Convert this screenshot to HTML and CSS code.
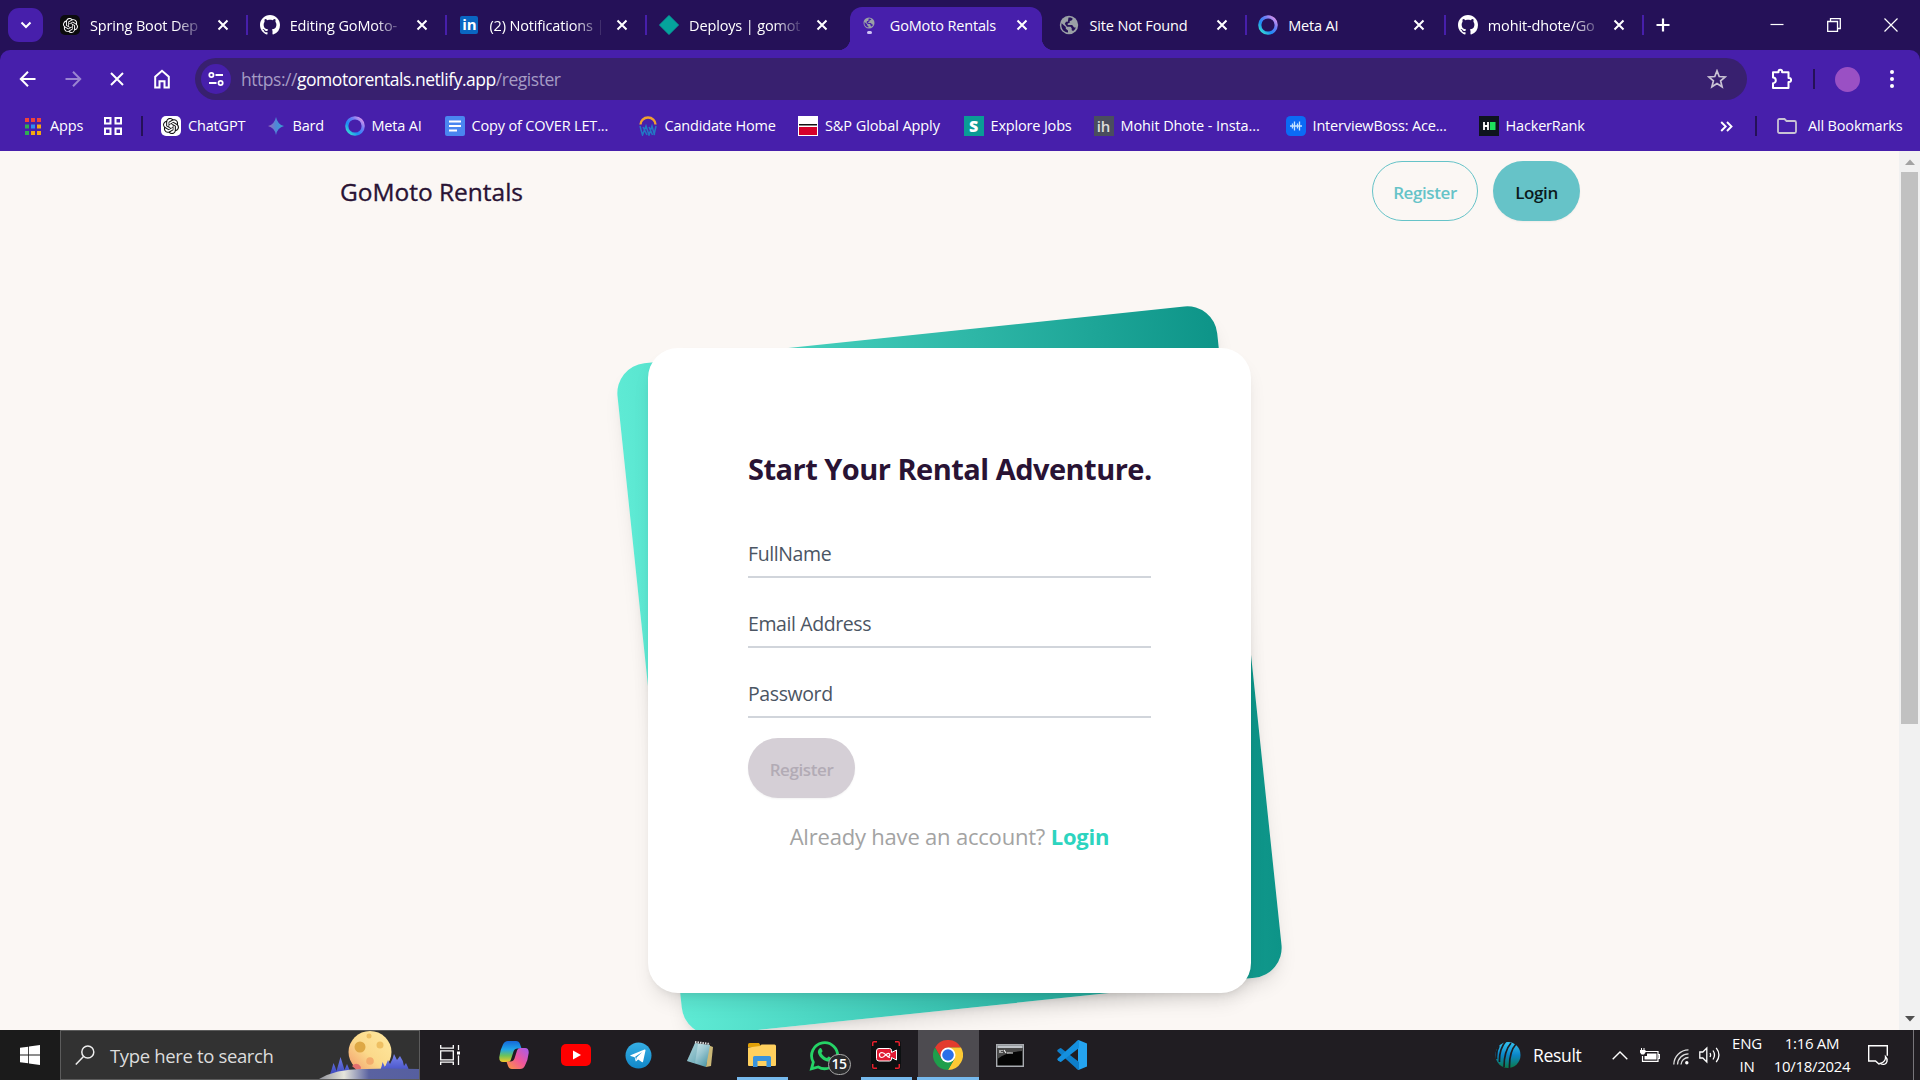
FILE: index.html
```html
<!DOCTYPE html>
<html lang="en">
<head>
<meta charset="utf-8">
<title>GoMoto Rentals</title>
<link rel="stylesheet" href="styles.css">
</head>
<body>
<svg width="0" height="0" class="defs" aria-hidden="true">
  <defs>
    <linearGradient id="metaG" x1="0" y1="1" x2="1" y2="0"><stop offset="0" stop-color="#3ef0c8"/><stop offset=".35" stop-color="#1c8cf5"/><stop offset=".65" stop-color="#6a7cf5"/><stop offset="1" stop-color="#f59be8"/></linearGradient>
    <linearGradient id="bardG" x1="0" y1="0" x2="1" y2="0"><stop offset="0" stop-color="#9a6bb8"/><stop offset=".5" stop-color="#4f86d8"/><stop offset="1" stop-color="#35a3d0"/></linearGradient>
    <linearGradient id="moonG" x1="1" y1="0" x2="0" y2="1"><stop offset="0" stop-color="#ffe9a0"/><stop offset=".55" stop-color="#fbd98a"/><stop offset="1" stop-color="#f2966a"/></linearGradient>
    <linearGradient id="hillG"><stop offset="0" stop-color="#8f9099"/><stop offset=".25" stop-color="#e6e6dc"/><stop offset=".5" stop-color="#5a62a0"/><stop offset="1" stop-color="#565fa0"/></linearGradient>
    <linearGradient id="treeG" x1="0" y1="0" x2="0" y2="1"><stop offset="0" stop-color="#7a86ee"/><stop offset="1" stop-color="#3440b8"/></linearGradient>
    <linearGradient id="copA" x1="0" y1="0" x2="0" y2="1"><stop offset="0" stop-color="#1668d8"/><stop offset=".4" stop-color="#1fa5e8"/><stop offset=".7" stop-color="#6cc35a"/><stop offset="1" stop-color="#f2c928"/></linearGradient>
    <linearGradient id="copB" x1="1" y1="0" x2="0" y2="1"><stop offset="0" stop-color="#a45cf0"/><stop offset=".5" stop-color="#f0569a"/><stop offset="1" stop-color="#fb9a3c"/></linearGradient>
    <linearGradient id="tgG" x1="0" y1="0" x2="0" y2="1"><stop offset="0" stop-color="#35aee4"/><stop offset="1" stop-color="#1187c8"/></linearGradient>
    <linearGradient id="noteG" x1="0" y1="0" x2="1" y2="1"><stop offset="0" stop-color="#e4f4f6"/><stop offset=".5" stop-color="#9cc8d2"/><stop offset="1" stop-color="#3d8d9e"/></linearGradient>
    <linearGradient id="cricG" x1="0" y1="0" x2="0" y2="1"><stop offset="0" stop-color="#35c3f0"/><stop offset=".5" stop-color="#0b86c8"/><stop offset="1" stop-color="#0b7a4a"/></linearGradient>
    <symbol id="x" viewBox="0 0 12 12"><path d="M1.5 1.5l9 9M10.5 1.5l-9 9" stroke="currentColor" stroke-width="2" fill="none"/></symbol>
    <symbol id="gh" viewBox="0 0 16 16"><path fill="#fff" d="M8 0C3.58 0 0 3.58 0 8c0 3.54 2.29 6.53 5.47 7.59.4.07.55-.17.55-.38 0-.19-.01-.82-.01-1.49-2.01.37-2.53-.49-2.69-.94-.09-.23-.48-.94-.82-1.13-.28-.15-.68-.52-.01-.53.63-.01 1.08.58 1.23.82.72 1.21 1.87.87 2.33.66.07-.52.28-.87.51-1.07-1.78-.2-3.64-.89-3.64-3.95 0-.87.31-1.59.82-2.15-.08-.2-.36-1.02.08-2.12 0 0 .67-.21 2.2.82.64-.18 1.32-.27 2-.27s1.36.09 2 .27c1.53-1.04 2.2-.82 2.2-.82.44 1.1.16 1.92.08 2.12.51.56.82 1.27.82 2.15 0 3.07-1.87 3.75-3.65 3.95.29.25.54.73.54 1.48 0 1.07-.01 1.93-.01 2.2 0 .21.15.46.55.38A8.01 8.01 0 0 0 16 8c0-4.42-3.58-8-8-8z"/></symbol>
    <symbol id="gpt" viewBox="0 0 24 24"><path fill="currentColor" d="M22.2819 9.8211a5.9847 5.9847 0 0 0-.5157-4.9108 6.0462 6.0462 0 0 0-6.5098-2.9A6.0651 6.0651 0 0 0 4.9807 4.1818a5.9847 5.9847 0 0 0-3.9977 2.9 6.0462 6.0462 0 0 0 .7427 7.0966 5.98 5.98 0 0 0 .511 4.9107 6.051 6.051 0 0 0 6.5146 2.9001A5.9847 5.9847 0 0 0 13.2599 24a6.0557 6.0557 0 0 0 5.7718-4.2058 5.9894 5.9894 0 0 0 3.9977-2.9001 6.0557 6.0557 0 0 0-.7475-7.0729zm-9.022 12.6081a4.4755 4.4755 0 0 1-2.8764-1.0408l.1419-.0804 4.7783-2.7582a.7948.7948 0 0 0 .3927-.6813v-6.7369l2.02 1.1686a.071.071 0 0 1 .038.052v5.5826a4.504 4.504 0 0 1-4.4945 4.4944zm-9.6607-4.1254a4.4708 4.4708 0 0 1-.5346-3.0137l.142.0852 4.783 2.7582a.7712.7712 0 0 0 .7806 0l5.8428-3.3685v2.3324a.0804.0804 0 0 1-.0332.0615L9.74 19.9502a4.4992 4.4992 0 0 1-6.1408-1.6464zM2.3408 7.8956a4.485 4.485 0 0 1 2.3655-1.9728V11.6a.7664.7664 0 0 0 .3879.6765l5.8144 3.3543-2.0201 1.1685a.0757.0757 0 0 1-.071 0l-4.8303-2.7865A4.504 4.504 0 0 1 2.3408 7.872zm16.5963 3.8558L13.1038 8.364 15.1192 7.2a.0757.0757 0 0 1 .071 0l4.8303 2.7913a4.4944 4.4944 0 0 1-.6765 8.1042v-5.6772a.79.79 0 0 0-.407-.667zm2.0107-3.0231l-.142-.0852-4.7735-2.7818a.7759.7759 0 0 0-.7854 0L9.409 9.2297V6.8974a.0662.0662 0 0 1 .0284-.0615l4.8303-2.7866a4.4992 4.4992 0 0 1 6.6802 4.66zM8.3065 12.863l-2.02-1.1638a.0804.0804 0 0 1-.038-.0567V6.0742a4.4992 4.4992 0 0 1 7.3757-3.4537l-.142.0805L8.704 5.459a.7948.7948 0 0 0-.3927.6813zm1.0976-2.3654l2.602-1.4998 2.6069 1.4998v2.9994l-2.5974 1.4997-2.6067-1.4997Z"/></symbol>
    <symbol id="meta" viewBox="0 0 20 20"><circle cx="10" cy="10" r="8.2" fill="none" stroke="url(#metaG)" stroke-width="3.2"/></symbol>
    <symbol id="globe" viewBox="0 0 20 20"><circle cx="10" cy="10" r="9.2" fill="#9aa0a6"/><path fill="var(--hole)" d="M2.6 8.2l4.2 3.9v1.6l2.2 1.7v2.2C5 17.300 2.200 14 2.400 10zM9.500 2.600c2-.4 3 .4 4.200.9-.2 1.700-1.200 2.400-3 2.400v1.800l-2 .8v1.600h4.500l1.900 2.400h1.700c-.4 1.400-1.300 2.700-2.700 3.500l-1.400-.8v-2l-1.200-1.400H8L5.800 8.700l1.200-2h1.800z"/></symbol>
  </defs>
</svg>

<div class="browser">
  <div class="tabstrip">
    <div class="tab-search"><svg width="12" height="8" viewBox="0 0 12 8"><path d="M1.500 1.500L6 6l4.500-4.500" fill="none" stroke="#fff" stroke-width="2"/></svg></div>
    <div class="tabs">
      <div class="tab"><span class="ico gpt-dark"><svg width="15" height="15"><use href="#gpt"/></svg></span><span class="title fade">Spring Boot Dep</span><svg class="close"><use href="#x"/></svg></div>
      <div class="tab"><svg class="ico"><use href="#gh"/></svg><span class="title fade">Editing GoMoto-</span><svg class="close"><use href="#x"/></svg></div>
      <div class="tab"><span class="ico linkedin">in</span><span class="title fade">(2) Notifications |</span><svg class="close"><use href="#x"/></svg></div>
      <div class="tab nosep"><svg class="ico" viewBox="0 0 20 20"><path d="M10 .5l9.500 9.500L10 19.500.5 10z" fill="#05a39c" stroke="#05a39c" stroke-linejoin="round"/></svg><span class="title fade">Deploys | gomot</span><svg class="close"><use href="#x"/></svg></div>
      <div class="tab active nosep"><span class="ico loading"><svg width="12" height="12"><use href="#globe"/></svg><i></i></span><span class="title">GoMoto Rentals</span><svg class="close"><use href="#x"/></svg></div>
      <div class="tab"><svg class="ico"><use href="#globe"/></svg><span class="title">Site Not Found</span><svg class="close"><use href="#x"/></svg></div>
      <div class="tab"><svg class="ico"><use href="#meta"/></svg><span class="title">Meta AI</span><svg class="close"><use href="#x"/></svg></div>
      <div class="tab"><svg class="ico"><use href="#gh"/></svg><span class="title fade">mohit-dhote/Go</span><svg class="close"><use href="#x"/></svg></div>
    </div>
    <svg class="newtab" width="14" height="14" viewBox="0 0 14 14"><path d="M7 .5v13M.5 7h13" stroke="#fff" stroke-width="2.200"/></svg>
    <div class="winctl">
      <svg width="14" height="14" viewBox="0 0 14 14"><path d="M.5 6.500h13" stroke="#fff" stroke-width="1.200"/></svg>
      <svg width="14" height="14" viewBox="0 0 14 14"><path d="M.7 3.500h9.800v9.800H.7zM3.500 3.500V.7h9.800v9.800h-2.800" fill="none" stroke="#fff" stroke-width="1.300"/></svg>
      <svg width="14" height="14" viewBox="0 0 14 14"><path d="M.5.5l13 13M13.500.5l-13 13" stroke="#fff" stroke-width="1.200"/></svg>
    </div>
  </div>

  <div class="chrome">
    <div class="toolbar">
      <div class="nav">
        <svg viewBox="0 0 20 20"><path d="M17.500 10H3.200M10 2.800L2.800 10l7.200 7.200" /></svg>
        <svg viewBox="0 0 20 20" class="dim"><path d="M2.500 10h14.300M10 2.800l7.200 7.200-7.200 7.200"/></svg>
        <svg viewBox="0 0 20 20"><path d="M4 4l12 12M16 4L4 16"/></svg>
        <svg viewBox="0 0 20 20"><path d="M3.200 18.500V7.800L10 1.800l6.800 6v10.700h-4.300v-6.300h-5v6.300z"/></svg>
      </div>
      <div class="omnibox">
        <div class="site"><svg width="16" height="16" viewBox="0 0 16 16" fill="none" stroke="#fff" stroke-width="1.800"><circle cx="3.400" cy="4" r="2.100"/><path d="M7.500 4H15M1 12h7.500"/><circle cx="12.600" cy="12" r="2.100"/></svg></div>
        <div class="url"><span>https://</span>gomotorentals.netlify.app<span>/register</span></div>
        <svg class="star" width="20" height="20" viewBox="0 0 20 20"><path d="M10 1.800l2.200 5.700 6.100.4-4.700 3.900 1.500 6L10 14.500l-5.100 3.300 1.500-6-4.700-3.900 6.100-.4z"/></svg>
      </div>
      <svg class="puzzle" width="22" height="22" viewBox="0 0 22 22"><path d="M3 4.200h5.500V3.500a1.800 1.800 0 0 1 3.600 0v.7h6.400V10h.6a2 2 0 0 1 0 4h-.6v6H3v-4.800a2.800 2.800 0 0 0 0-5.600z"/></svg>
      <i class="vsep"></i>
      <i class="avatar"></i>
      <svg class="dots" width="4" height="18" viewBox="0 0 4 18" fill="#fff"><circle cx="2" cy="2" r="2"/><circle cx="2" cy="9" r="2"/><circle cx="2" cy="16" r="2"/></svg>
    </div>

    <div class="bookmarks">
      <a class="bm b-apps"><svg width="16" height="17" viewBox="0 0 16 17"><path fill="#f0443a" d="M0 0h4v4H0zM6 0h4v4H6zM12 0h4v4h-4z"/><path fill="#2fae52" d="M0 6.500h4v4H0zM0 13h4v4H0z"/><path fill="#2f8cf0" d="M6 6.500h4v4H6z"/><path fill="#f5a813" d="M12 6.500h4v4h-4zM6 13h4v4H6zM12 13h4v4h-4z"/></svg><span>Apps</span></a>
      <svg class="grid" width="18" height="18" viewBox="0 0 18 18" fill="none" stroke="#fff" stroke-width="2"><path d="M1 1h5.500v5.500H1zM11.500 1H17v5.500h-5.500zM1 11.500h5.500V17H1zM11.500 11.500H17V17h-5.500z"/></svg>
      <i class="vsep"></i>
      <a class="bm b-gpt"><span class="ico gpt-light"><svg width="16" height="16"><use href="#gpt"/></svg></span><span>ChatGPT</span></a>
      <a class="bm b-bard"><svg width="18" height="20" viewBox="0 0 18 20"><path d="M9 1Q10.500 8.500 17 10 10.500 11.500 9 19 7.500 11.500 1 10 7.500 8.500 9 1z" fill="url(#bardG)"/></svg><span>Bard</span></a>
      <a class="bm b-meta"><svg class="ico"><use href="#meta"/></svg><span>Meta AI</span></a>
      <a class="bm b-copy"><svg class="ico" viewBox="0 0 20 20"><rect width="20" height="20" rx="2" fill="#4a86f0"/><path d="M4 5.500h12M4 10h12M4 14.500h8" stroke="#fff" stroke-width="2"/></svg><span>Copy of COVER LET...</span></a>
      <a class="bm b-cand"><svg class="ico" viewBox="0 0 20 20" fill="none"><path d="M2.500 8.500a7.500 7 0 0 1 15 0" stroke="#f0a030" stroke-width="2.400"/><path d="M2 10l2.500 9L8 10l3 9 3-9 2.500 9M5 11l4 8M11 11l3.500 8M18 10l-2 9" stroke="#2378c4" stroke-width="1.500"/></svg><span>Candidate Home</span></a>
      <a class="bm b-sp"><svg class="ico" viewBox="0 0 20 20"><path fill="#fff" d="M0 0h20v20H0z"/><path fill="#111" d="M1 8h18v1.500H1z"/><path fill="#d6002a" d="M1 11h18v8H1z"/></svg><span>S&amp;P Global Apply</span></a>
      <a class="bm b-exp"><span class="ico s-ico">S</span><span>Explore Jobs</span></a>
      <a class="bm b-moh"><span class="ico ih-ico">ih</span><span>Mohit Dhote - Insta...</span></a>
      <a class="bm b-int"><svg class="ico" viewBox="0 0 20 20"><rect width="20" height="20" rx="4.500" fill="#0b6bf5"/><path d="M4 10h12M6.500 7.500v5M8.500 5.500v9M11.500 7.500v5M13.500 5.500v9" stroke="#c4e4ff" stroke-width="1.300"/></svg><span>InterviewBoss: Ace...</span></a>
      <a class="bm b-hr"><svg class="ico" viewBox="0 0 20 20"><path fill="#0e141e" d="M0 0h20v20H0z"/><path d="M5 6v8M9 6v8M5 10h4" stroke="#fff" stroke-width="1.800"/><path fill="#1ee05c" d="M11 6h5.500v8H11z"/></svg><span>HackerRank</span></a>
      <div class="more">
        <svg width="13" height="11" viewBox="0 0 13 11"><path d="M1.200 1l4.500 4.500-4.500 4.500M7 1l4.500 4.500L7 10" fill="none" stroke="#fff" stroke-width="1.900"/></svg>
        <i class="vsep"></i>
        <a class="bm b-all"><svg width="20" height="16" viewBox="0 0 20 16"><path d="M1 2.500Q1 1 2.500 1h5l2 2h8Q19 3 19 4.500v9q0 1.500-1.500 1.500h-15Q1 15 1 13.500z" fill="none" stroke="#c9c3d4" stroke-width="1.800"/></svg><span>All Bookmarks</span></a>
      </div>
    </div>
  </div>
</div>

<div class="viewport">
  <main class="page">
    <header class="site-header">
      <div class="brand">GoMoto Rentals</div>
      <div class="actions"><a class="btn outline">Register</a><a class="btn solid">Login</a></div>
    </header>
    <section class="card-wrap">
      <div class="tilt"></div>
      <form class="card">
        <h1>Start Your Rental Adventure.</h1>
        <div class="field">FullName</div>
        <div class="field">Email Address</div>
        <div class="field">Password</div>
        <div class="btn disabled">Register</div>
        <p>Already have an account? <b>Login</b></p>
      </form>
    </section>
  </main>
  <div class="scrollbar"><svg width="10" height="6"><path d="M0 6l5-5.500L10 6z" fill="#a3a3a3"/></svg><i></i><svg width="10" height="6"><path d="M0 0l5 5.500L10 0z" fill="#505050"/></svg></div>
</div>

<div class="taskbar">
  <div class="start"><svg width="20" height="20" viewBox="0 0 20 20" fill="#fff"><path d="M0 2.800L8.200 1.700v7.900H0zM9 1.600L20 0v9.600H9zM0 10.400h8.200v7.900L0 17.200zM9 10.400h11V20L9 18.400z"/></svg></div>
  <div class="search">
    <svg width="20" height="20" viewBox="0 0 20 20" fill="none" stroke="#eee" stroke-width="1.500"><circle cx="12.800" cy="7" r="6"/><path d="M8.500 11.500L.8 19.500"/></svg>
    <span>Type here to search</span>
    <svg class="moon" width="100" height="48" viewBox="0 0 100 48"><ellipse cx="51" cy="21" rx="21.500" ry="21" fill="url(#moonG)"/><g fill="#eebf62"><circle cx="41" cy="16" r="5.500" fill="#dea845"/><circle cx="61" cy="14" r="3.500"/><circle cx="50" cy="5" r="2.500"/><circle cx="51" cy="30" r="3.800" fill="#f3ac6c"/><path d="M33 35q5-5 9 1l-1 6z" fill="#e2706e"/></g><path fill="url(#treeG)" d="M10 46q3-8 4.500-14 1.500 3 3 8 2-7 4-14 2 6 4 13l2.500-6q3 6 5 13zM61 40q2-5 2.500-9l2.500 5 3-7 2 4q3-5 4-10l3 6 3-4q3 4 4 10l2-3q3 5 3.500 11z"/><path d="M0 48q18-11 48-10 20-1 52 0v10z" fill="url(#hillG)"/></svg>
  </div>
  <div class="apps">
    <div class="app"><svg width="20" height="20" viewBox="0 0 20 20" fill="none" stroke="#fff" stroke-width="1.300"><path d="M.7 0v3.200h12.600V0M.7 5.800h12.600v9H.7zM.7 20v-2.800h12.600V20M18.500 0v5M18.500 10.500V20"/><path d="M17 6.500h3v3h-3z" fill="#fff" stroke="none"/></svg></div>
    <div class="app"><svg width="30" height="28" viewBox="0 0 30 28"><path d="M9 0h8q3 0 4 3l1.500 4.500h-4q-3 0-4 3l-2.700 8.500Q11 21 8.500 21H4Q0 21 .3 16 1 9 4 3.500 5.500 0 9 0z" fill="url(#copA)"/><path d="M21 28h-8q-3 0-4-3l-1.500-4.500h4q3 0 4-3L18.200 9Q19 7 21.500 7H26q4 0 3.700 5-.7 7-3.700 12.500Q24.500 28 21 28z" fill="url(#copB)"/></svg></div>
    <div class="app"><svg width="30" height="22" viewBox="0 0 30 22"><rect width="30" height="22" rx="5" fill="#f00"/><path d="M12 6.500l8 4.500-8 4.500z" fill="#fff"/></svg></div>
    <div class="app"><svg width="27" height="27" viewBox="0 0 27 27"><circle cx="13.500" cy="13.500" r="13" fill="url(#tgG)"/><path d="M5.500 13.200l14-5.600q1.200-.3 1 1l-2.400 11q-.3 1-1.300.5l-3.600-2.700-2 1.900q-.4.300-.6-.4l-.9-3.700-4.100-1.300q-.7-.4-.1-.7z" fill="#fff"/><path d="M10.200 14.800l7-4.800-5.600 5.500-.4 2.600z" fill="#1b92d0"/></svg></div>
    <div class="app"><svg width="28" height="28" viewBox="0 0 28 28"><path d="M22 4l5 2-2 19-5 1z" fill="#cbb878"/><path d="M9 2l15 2-4 22L1 20z" fill="url(#noteG)"/><path d="M9 2l3 1-3 19-8-2z" fill="#3d8d9e" opacity=".3"/><path d="M9 1l15 2" stroke="#ddd" stroke-width="2" stroke-dasharray="1.500 1"/></svg></div>
    <div class="app run"><svg width="28" height="24" viewBox="0 0 28 24"><path d="M0 1.500Q0 0 1.500 0H11l2.500 4H0z" fill="#e0a008"/><path d="M0 4.500L12 3l1.500-1.500H26.500Q28 1.500 28 3v19q0 1-1 1H1q-1 0-1-1z" fill="#ffd05e"/><path d="M5 24V14.500q0-1.500 1.500-1.500h15q1.500 0 1.500 1.500V24h-4.500v-6h-9v6z" fill="#3a93dc"/></svg></div>
    <div class="app"><span class="wa"><svg width="31" height="31" viewBox="0 0 31 31"><path d="M2.500 28.800l1.800-6.700A13 13 0 1 1 9.200 27z" fill="none" stroke="#25d366" stroke-width="2.800"/><path d="M10.500 8.500c.8-.8 1.700-.5 2 .3l1 2.300c.2.700-.9 1.600-1.100 2 1.300 2.500 3 4 5.500 5 .6-.3 1.300-1.700 2-1.500l2.600 1.300c1 .5.300 2.500-.8 3.100-2 1.200-4.500.6-7.500-1.200-3-2-5-4.800-5.300-7.200-.2-1.700.6-3 1.600-4.100z" fill="#25d366"/></svg><i>15</i></span></div>
    <div class="app run"><svg width="30" height="30" viewBox="0 0 30 30"><rect width="30" height="30" rx="4" fill="#0c1011"/><path d="M1.700 6V3q0-1.300 1.300-1.300h3M24 1.700h3q1.300 0 1.300 1.300v3M28.300 24v3q0 1.300-1.300 1.300h-3M6 28.300H3q-1.300 0-1.300-1.300v-3" fill="none" stroke="#e8202c" stroke-width="1.500"/><path d="M8 8.500h10.500q2 0 2 2v2l5-2.500v10l-5-2.500v1.500q0 2-2 2H8q-2.500 0-2.500-2.500v-7.500q0-2.500 2.500-2.500z" fill="#e01b33" stroke="#fff" stroke-width="1"/><path d="M19 17.500c-3 .5-4.500-5-8-5-3.500.2-3.300 5 0 5 3 0 4-4.500 6.500-4.200 2 .4 1.500 2.900 0 2.900" fill="none" stroke="#fff" stroke-width="1.200"/></svg></div>
    <div class="app run current"><svg width="30" height="30" viewBox="0 0 48 48"><path fill="#e33b2e" d="M3.200 12a24 24 0 0 1 41.600 0H24L13.600 30z"/><path fill="#fcc934" d="M44.800 12A24 24 0 0 1 24 48l10.400-18L24 12z"/><path fill="#1e9e4b" d="M24 48A24 24 0 0 1 3.200 12l10.400 18h20.800z"/><circle cx="24" cy="24" r="12" fill="#fff"/><circle cx="24" cy="24" r="9.300" fill="#2a6fe8"/></svg></div>
    <div class="app"><svg width="28" height="23" viewBox="0 0 28 23"><path d="M.7.700h26.600v21.600H.7z" fill="#050505" stroke="#a8abb0" stroke-width="1.400"/><path d="M1.400 1.400h25.200V4H1.400z" fill="#bfc3c8"/><path d="M1.400 4h25.200v3Q9 8 1.400 15z" fill="#4a4a4a"/><path d="M4 6v3M6 6v1M6 8v1M8 6l2 3M11 9h6" stroke="#eee" stroke-width="1.200"/></svg></div>
    <div class="app"><svg width="30" height="30" viewBox="0 0 30 30"><path d="M21.500 0L30 3.500v23L21.500 30l-2-1.500L21 22V8.500l-1.500-7z" fill="#25a4f0"/><path d="M1 9.500l2-1.300q.6-.3 1.200.1L22 22v7.500q-1 .5-2-.4L.6 11.500q-.8-1 .4-2z" fill="#0e7fcb"/><path d="M1 20.500l2 1.300q.6.300 1.200-.1L22 8V.5q-1-.5-2 .4L.6 18.500q-.8 1 .4 2z" fill="#1490df"/></svg></div>
  </div>
  <div class="tray">
    <svg class="cric" width="26" height="28" viewBox="0 0 26 28"><ellipse cx="13" cy="14" rx="12.500" ry="13" fill="url(#cricG)"/><path d="M11 0Q4 8 4.500 21M16 2Q9 10 9 26M21 3q-7 8-6.500 24M4 5Q1 10 1.500 18" fill="none" stroke="#1d1c21" stroke-width="1.700"/></svg>
    <span class="result">Result</span>
    <svg class="chev" width="16" height="9" viewBox="0 0 16 9"><path d="M.7 8.200L8 1l7.300 7.200" fill="none" stroke="#fff" stroke-width="1.400"/></svg>
    <svg class="batt" width="20" height="14" viewBox="0 0 20 14"><path d="M5 3.500h13v9.800H2.500V8M18 6.500h1.500v4H18" fill="none" stroke="#fff" stroke-width="1.200"/><path d="M7 5.500h9.500v6H4.500V8H7zM0 2h5.500v2.500L4 6.500H1.500L0 4.500zM1 0h1v2H1zM3.500 0h1v2h-1z" fill="#fff"/></svg>
    <svg class="wifi" width="16" height="16" viewBox="0 0 16 16" fill="none" stroke="#ddd" stroke-width="1.300"><path d="M.8 15.500A15 15 0 0 1 15.500.8M4.500 15.500A11 11 0 0 1 15.500 4.800M8 15.500a7.500 7.500 0 0 1 7.500-7"/><circle cx="13.800" cy="13.800" r="1.700" fill="#fff" stroke="none"/></svg>
    <svg class="vol" width="22" height="18" viewBox="0 0 22 18" fill="none" stroke="#fff" stroke-width="1.300"><path d="M.8 6h3l4-4v14l-4-4h-3zM11 7q1.200 2 0 4M14 4.500q3 4.500 0 9M17.200 1.800q5.500 7 0 14.400"/></svg>
    <div class="two lang"><span>ENG</span><span>IN</span></div>
    <div class="two clock"><span>1:16 AM</span><span>10/18/2024</span></div>
    <svg class="notif" width="21" height="21" viewBox="0 0 21 21"><path d="M11.500 19.500l-4-3.500H.7V.7h18.600v10" fill="none" stroke="#fff" stroke-width="1.400"/><path d="M17.500 11.500q.5 5.500-5.500 7 5.500 2.500 7-2 .5-3-1.500-5z" fill="none" stroke="#fff" stroke-width="1.300"/></svg>
    <i class="desk"></i>
  </div>
</div>
</body>
</html>
```
FILE: styles.css
```css
* { box-sizing: border-box; }
body { margin: 0; width: 1920px; height: 1080px; overflow: hidden; display: flex; flex-direction: column; font-family: "Open Sans", "Noto Sans", sans-serif; font-size: 14px; color: #fff; --hole: #251158; }
svg { display: block; flex: none; }
.defs { position: absolute; }
span, a { white-space: nowrap; }
.ico { width: 20px; height: 20px; flex: none; display: flex; align-items: center; justify-content: center; }

/* window chrome */
.browser { height: 151px; flex: none; background: #251158; }
.tabstrip { height: 50px; display: flex; align-items: center; }
.tab-search { width: 35px; height: 34px; margin-left: 8px; border-radius: 11px; background: #471fab; display: flex; align-items: center; justify-content: center; }
.tabs { display: flex; margin-left: 5px; height: 50px; }
.tab { width: 199.7px; display: flex; align-items: center; padding: 0 17px 0 12px; position: relative; font-size: 14.5px; letter-spacing: -.15px; }
.tab::after { content: ""; position: absolute; right: 0; top: 15px; width: 2px; height: 20px; background: #471fab; }
.tab.nosep::after { display: none; }
.tab .title { margin-left: 10px; width: 118px; }
.fade { -webkit-mask-image: linear-gradient(90deg, #000 72%, transparent 98%); mask-image: linear-gradient(90deg, #000 72%, transparent 98%); }
.close { width: 12px; height: 12px; margin-left: auto; margin-right: 2px; }
.tab:nth-child(n+7) .close { margin-right: 4px; }
.tab:nth-child(8)::after { right: 2px; }
.gpt-dark { background: #0c0c0e; border-radius: 5px; color: #fff; }
.gpt-light { background: #fff; border-radius: 5px; color: #111; }
.linkedin { width: 18px; height: 18px; margin: 0 1px; background: #0a66c2; border-radius: 2px; font-weight: 700; font-size: 15px; line-height: 17px; padding-bottom: 2px; }
.tab.active { z-index: 0; --hole: #471fab; }
.tab.active, .tab.active + .tab { left: 1px; }
.tab.active::before { content: ""; position: absolute; z-index: -1; left: 2px; right: 5.500px; top: 7px; bottom: 0; background: #471fab; border-radius: 12px 12px 0 0; }
.tab.active::after { display: block; z-index: -1; left: -10px; right: -6.500px; width: auto; top: 38px; height: 12px; background: radial-gradient(circle at 0 0, transparent 12px, #471fab 12.500px) left / 12px 12px no-repeat, radial-gradient(circle at 100% 0, transparent 12px, #471fab 12.500px) right / 12px 12px no-repeat; }
.loading { flex-direction: column; gap: 2px; padding-right: 1px; }
.loading i { width: 5px; height: 3px; background: #cfc3f5; border-radius: 2px; }
.newtab { margin-left: 10px; }
.winctl { display: flex; margin-left: auto; margin-right: 22px; gap: 43px; }
.chrome { background: #471fab; height: 101px; border-radius: 10px 10px 0 0; }
.toolbar { height: 58px; display: flex; align-items: center; padding: 8px 26px 8px 18px; }
.nav { display: flex; gap: 24.700px; }
.nav svg { width: 20px; height: 20px; fill: none; stroke: #fff; stroke-width: 2; }
.nav .dim { opacity: .45; }
.omnibox { width: 1552px; height: 42px; margin-left: 23px; border-radius: 21px; background: #38206f; display: flex; align-items: center; padding: 0 20px 0 6px; }
.site { width: 30px; height: 30px; border-radius: 50%; background: #471fab; display: flex; align-items: center; justify-content: center; }
.url { margin-left: 10px; font-size: 17.500px; letter-spacing: -.47px; }
.url span { color: #a59bc4; }
.star { margin-left: auto; fill: none; stroke: #c9c3d4; stroke-width: 1.700; }
.puzzle { margin-left: 23px; fill: none; stroke: #fff; stroke-width: 2; stroke-linejoin: round; }
.vsep { width: 2px; height: 20px; background: #251158; flex: none; }
.toolbar .vsep { margin-left: 21px; }
.avatar { width: 25px; height: 25px; margin-left: 20px; border-radius: 50%; background: #9a50c4; }
.dots { margin-left: auto; }
.bookmarks { display: flex; align-items: center; height: 36px; padding-left: 25px; font-size: 14.500px; letter-spacing: -.17px; }
.bm { display: flex; align-items: center; gap: 7px; }
.bm > span:last-child { position: relative; top: -1px; }
.b-apps { width: 79px; gap: 9px; }
.bookmarks > .vsep { margin: 0 18px 0 19px; }
.b-gpt { width: 105.500px; }
.b-bard { width: 78px; gap: 8px; }
.b-meta { width: 100px; }
.b-copy { width: 193px; }
.b-cand { width: 160.500px; }
.b-sp { width: 165.500px; letter-spacing: -.08px; }
.b-exp { width: 130px; }
.b-moh { width: 192px; letter-spacing: -.1px; }
.b-int { width: 193px; }
.b-hr { width: 150px; }
.s-ico { background: #0a9c96; font-weight: 800; font-size: 16px; line-height: 20px; }
.ih-ico { background: #4a4d5e; font-weight: 600; font-size: 15px; line-height: 20px; color: #ddd; }
.more { display: flex; align-items: center; margin-left: auto; margin-right: 18px; }
.more .vsep { margin: 0 20px 0 22px; }
.b-all { width: 125px; gap: 11px; }

/* page */
.viewport { flex: 1; min-height: 0; display: flex; background: #fbf7f4; color: #291334; }
.page { width: 1899px; overflow: hidden; }
.site-header { width: 1240px; height: 70px; margin: 0 0 0 340px; padding-top: 10px; display: flex; justify-content: space-between; align-items: flex-start; }
.brand { font-size: 24.500px; font-weight: 500; line-height: 60px; padding-top: 1px; -webkit-text-stroke: .35px; letter-spacing: -.02px; }
.actions { display: flex; gap: 15px; }
.btn { height: 60px; border-radius: 30px; display: flex; align-items: center; justify-content: center; font-weight: 600; font-size: 17px; letter-spacing: -.4px; padding-top: 2px; }
.outline { width: 106px; border: 1px solid #66c3c8; color: #66c3c8; }
.solid { width: 87px; background: #66c3c8; color: #0b1a1c; box-shadow: 0 1px 2px rgba(0,0,0,.05); }
.card-wrap { position: relative; width: 603px; height: 645px; margin: 127px 0 0 648px; }
.tilt { position: absolute; inset: -15px 0; border-radius: 30px; background: linear-gradient(90deg, #5eead4, #0d9488); transform: rotate(-6deg); box-shadow: 0 12px 19px -4px rgba(0,0,0,.1), 0 5px 8px -5px rgba(0,0,0,.1); }
.card { position: relative; height: 645px; border-radius: 30px; background: #fff; box-shadow: 0 12px 19px -4px rgba(0,0,0,.1), 0 5px 8px -5px rgba(0,0,0,.1); padding: 100px 100px 0; }
h1 { margin: 0 0 34px; font-size: 29px; letter-spacing: -.52px; line-height: 42px; font-weight: 700; white-space: nowrap; }
.field { height: 54px; margin-bottom: 16px; border-bottom: 2px solid #d1d5db; color: #4b5563; font-size: 19.500px; letter-spacing: -.4px; line-height: 60px; }
.card .disabled { width: 107px; margin-top: 20px; background: #d5cfd6; color: #b2abb5; box-shadow: 0 1px 2px rgba(0,0,0,.05); }
.card p { margin: 21px 0 0; text-align: center; font-size: 22px; letter-spacing: -.2px; line-height: 34px; color: #a3a3a3; white-space: nowrap; }
.card b { color: #2dd4bf; font-weight: 700; }
.scrollbar { width: 21px; background: #f1f1f1; display: flex; flex-direction: column; align-items: center; padding: 8px 0; }
.scrollbar i { width: 17px; height: 552px; margin: 7px 0 auto; background: #c1c1c1; }

/* taskbar */
.taskbar { height: 50px; flex: none; background: #201d22; display: flex; }
.start { width: 60px; display: flex; align-items: center; justify-content: center; background: #1b1b1b; }
.search { width: 360px; background: #323232; border: 1px solid #5c5c5c; display: flex; align-items: center; padding-left: 14px; color: #dcdcdc; font-size: 18.500px; letter-spacing: -.35px; overflow: hidden; }
.search span { margin-left: 15px; }
.moon { margin-left: auto; }
.apps { display: flex; width: 700px; }
.app { width: 62px; margin: 0; display: flex; align-items: center; justify-content: center; position: relative; flex: none; }
.app:first-child { width: 63px; padding-right: 3px; }
.run::after { content: ""; position: absolute; left: 6px; right: 5px; bottom: 0; height: 3px; background: #76b9ed; }
.current { background: linear-gradient(#4d4b50, #4d4b50) center / 61px 50px no-repeat; }
.current::after { left: 0; right: 0; }
.wa { position: relative; }
.wa i { position: absolute; left: 19px; top: 14px; width: 23px; height: 21px; border: 1px solid #aaa; border-radius: 11px; background: #2a2a2c; font: 600 14px/18px "Open Sans", sans-serif; letter-spacing: -.5px; text-align: center; }
.tray { margin-left: auto; width: 425px; display: flex; align-items: center; font-size: 15px; }
.result { margin-left: 12px; font-size: 17.500px; letter-spacing: -.3px; width: 49px; }
.chev { margin-left: 30px; }
.batt { margin-left: 12px; }
.wifi { margin-left: 13px; margin-top: 4px; }
.vol { margin-left: 10px; }
.two { display: flex; flex-direction: column; align-items: center; line-height: 23px; }
.lang { width: 30px; margin-left: 11px; font-size: 15px; letter-spacing: -.2px; }
.clock { width: 76px; margin-left: 12px; font-size: 15px; letter-spacing: -.3px; }
.notif { margin-left: 18px; }
.desk { width: 1px; height: 50px; margin-left: 24px; background: #77757a; }
```
